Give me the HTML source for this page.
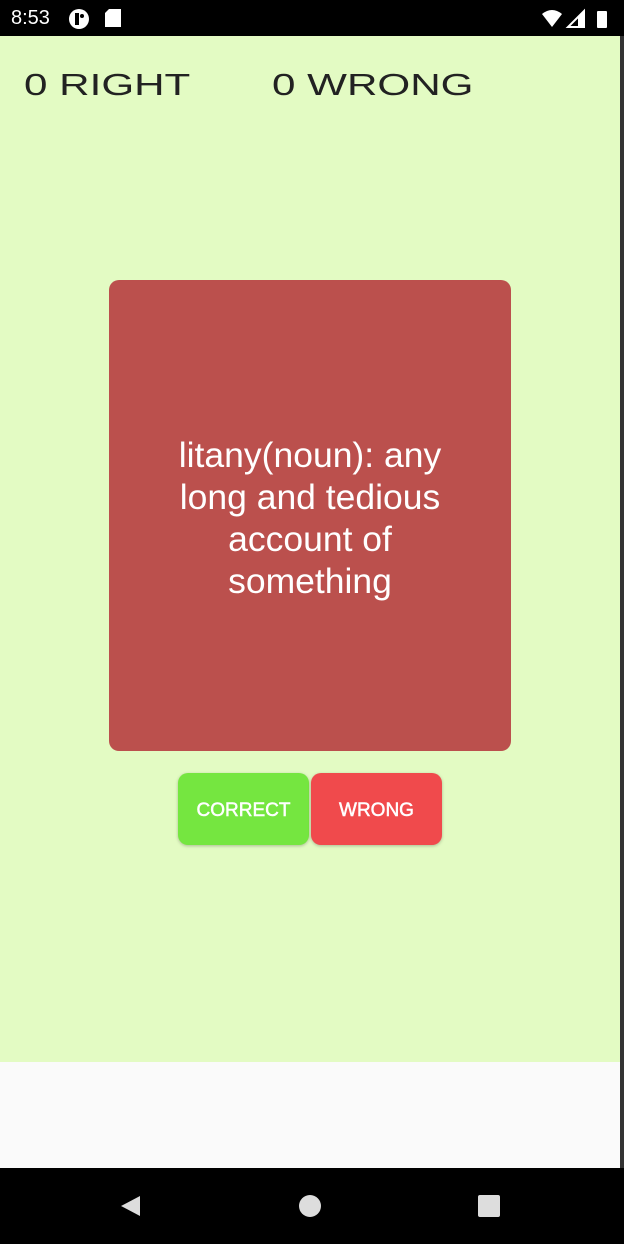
<!DOCTYPE html>
<html><head><style>
*{margin:0;padding:0;box-sizing:border-box}
body{width:624px;height:1244px;position:relative;background:#e3fbc3;font-family:"Liberation Sans",sans-serif;overflow:hidden}
.sb{position:absolute;left:0;top:0;width:624px;height:36px;background:#000;color:#fff}
.main{position:absolute;left:0;top:36px;width:620px;height:1026px;background:#e3fbc3}
.strip{position:absolute;left:620px;top:36px;width:4px;height:1132px;background:#333}
.gray{position:absolute;left:0;top:1062px;width:620px;height:106px;background:#fafafa}
.nav{position:absolute;left:0;top:1168px;width:624px;height:76px;background:#000}
.score{position:absolute;top:67px;font-size:31px;color:#222;transform:scaleX(1.36);transform-origin:left;font-weight:normal}
.card{position:absolute;left:109px;top:280px;width:402px;height:471px;background:#bb504d;border-radius:10px;color:#fff;font-size:35.5px;line-height:42px;text-align:center;display:flex;align-items:center;justify-content:center;padding:4px 40px 0}
.btn{position:absolute;top:773px;width:131px;height:72px;border-radius:10px;color:#fff;font-size:19px;-webkit-text-stroke:0.5px #fff;display:flex;align-items:center;justify-content:center;padding-top:3px;box-shadow:0 1px 3px rgba(0,0,0,.25)}
</style></head><body>
<div class="sb">
<span style="position:absolute;left:11px;top:7px;font-size:20px">8:53</span>
<svg style="position:absolute;left:68px;top:8px" width="24" height="22"><circle cx="11" cy="11" r="10" fill="#fff"/><rect x="7" y="5" width="4" height="12" fill="#000"/><circle cx="14" cy="8" r="2" fill="#000"/></svg>
<svg style="position:absolute;left:104px;top:8px" width="18" height="20"><path d="M5 1h12v18H1V5z" fill="#fff"/></svg>
<svg style="position:absolute;left:540px;top:8px" width="70" height="22"><path d="M2 6Q12 -2 22 6L12 19z" fill="#fff"/><path d="M44 3V19H28z" fill="none" stroke="#fff" stroke-width="2"/><path d="M44 3V19H38V9z" fill="#fff"/><rect x="57" y="3" width="10" height="17" rx="1" fill="#fff"/></svg>
</div>
<div class="main"></div>
<div class="strip"></div>
<div class="gray"></div>
<div class="score" style="left:24px">0 RIGHT</div>
<div class="score" style="left:272px">0 WRONG</div>
<div class="card">litany(noun): any long and tedious account of something</div>
<div class="btn" style="left:178px;background:#75e640">CORRECT</div>
<div class="btn" style="left:311px;background:#f04a4c">WRONG</div>
<div class="nav">
<svg style="position:absolute;left:118px;top:26px" width="24" height="24"><path d="M22 2V22L3 12z" fill="#ddd"/></svg>
<svg style="position:absolute;left:298px;top:26px" width="24" height="24"><circle cx="12" cy="12" r="11" fill="#ddd"/></svg>
<svg style="position:absolute;left:477px;top:26px" width="24" height="24"><rect x="1" y="1" width="22" height="22" rx="2" fill="#ddd"/></svg>
</div>
</body></html>
